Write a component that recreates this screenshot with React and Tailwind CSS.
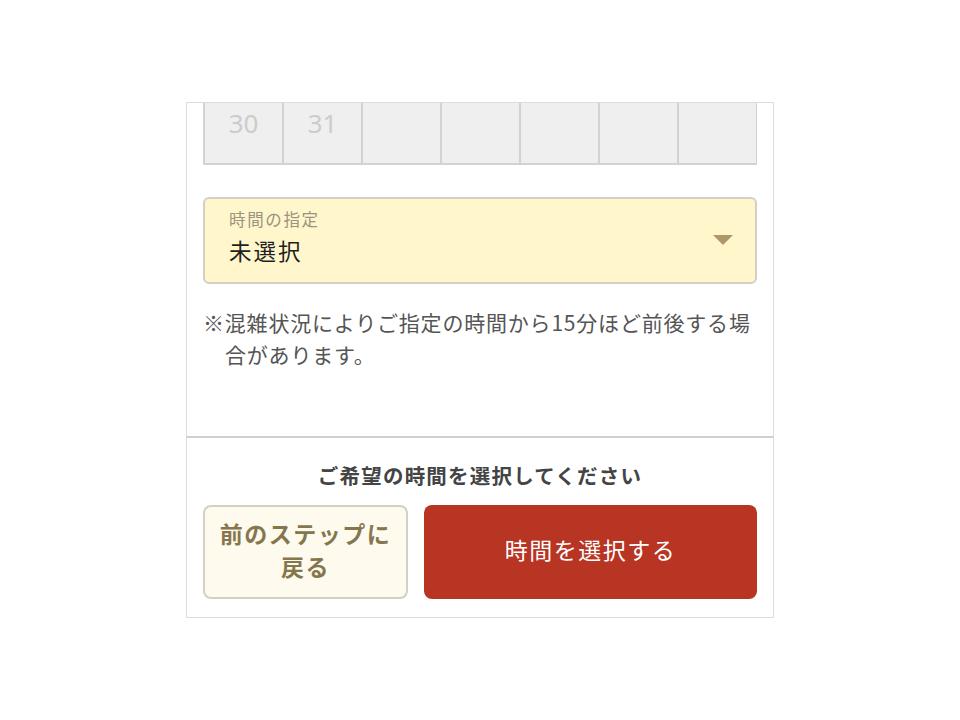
import React from "react"

const jp = { fontFamily: '"Noto Sans CJK JP", "Noto Sans", sans-serif' }

const lastWeek = ["30", "31", "", "", "", "", ""]

const App = () => {
  return (
    <div className="w-[960px] h-[720px] bg-white flex items-center justify-center" style={jp}>
      <div className="w-[588px] h-[516px] border border-[#dcdcdc] flex flex-col bg-white">
        {/* Scroll area */}
        <div className="flex-1 overflow-hidden px-4">
          <div className="grid grid-cols-7 border-r border-b-2 border-[#d2d2d2] bg-[#efefef]">
            {lastWeek.map((d, i) => (
              <div key={i} className="h-[60px] border-l-2 border-[#d2d2d2] flex justify-center pt-[3px]">
                <span className="text-[26px] leading-[34px] text-[#cccccc]" style={{ fontFamily: '"Noto Sans", sans-serif' }}>{d}</span>
              </div>
            ))}
          </div>

          <div className="mt-[32px] h-[87px] rounded-md border-2 border-[#d2cfc4] bg-[#fff6cc] flex items-start pl-[24px] pr-[22px] pt-[9px]">
            <div className="flex-1">
              <div className="text-[16.5px] leading-[22px] tracking-[0.1em] text-[#9a9480]">時間の指定</div>
              <div className="text-[22.5px] leading-[32px] tracking-[2px] text-[#1f1f1f] mt-[4px]">未選択</div>
            </div>
            <svg width="20" height="10" viewBox="0 0 20 10" className="mt-[27px]">
              <polygon points="0,0 20,0 10,10" fill="#ad9868" />
            </svg>
          </div>

          <p className="mt-[22px] text-[21px] leading-[32px] text-[#555] pl-[22px] -indent-[22px] tracking-[0.8px]">
            ※混雑状況によりご指定の時間から15分ほど前後する場合があります。
          </p>
        </div>

        {/* Footer */}
        <div className="border-t-2 border-[#d0d0d0] px-4 pt-[22px] pb-[18px]">
          <div className="text-center text-[20.5px] leading-[30px] tracking-[1.2px] font-bold text-[#444]">
            ご希望の時間を選択してください
          </div>
          <div className="mt-[15px] flex gap-4">
            <button className="w-[205px] h-[94px] rounded-lg border-2 border-[#d3d0c6] bg-[#fefaee] text-[23px] leading-[33px] tracking-[1.5px] font-bold text-[#85774d] px-3 pb-[5px]">
              前のステップに戻る
            </button>
            <button className="flex-1 h-[94px] rounded-lg bg-[#b83423] text-[23px] tracking-[1.5px] text-white pb-[5px]">
              時間を選択する
            </button>
          </div>
        </div>
      </div>
    </div>
  )
}

export default App
